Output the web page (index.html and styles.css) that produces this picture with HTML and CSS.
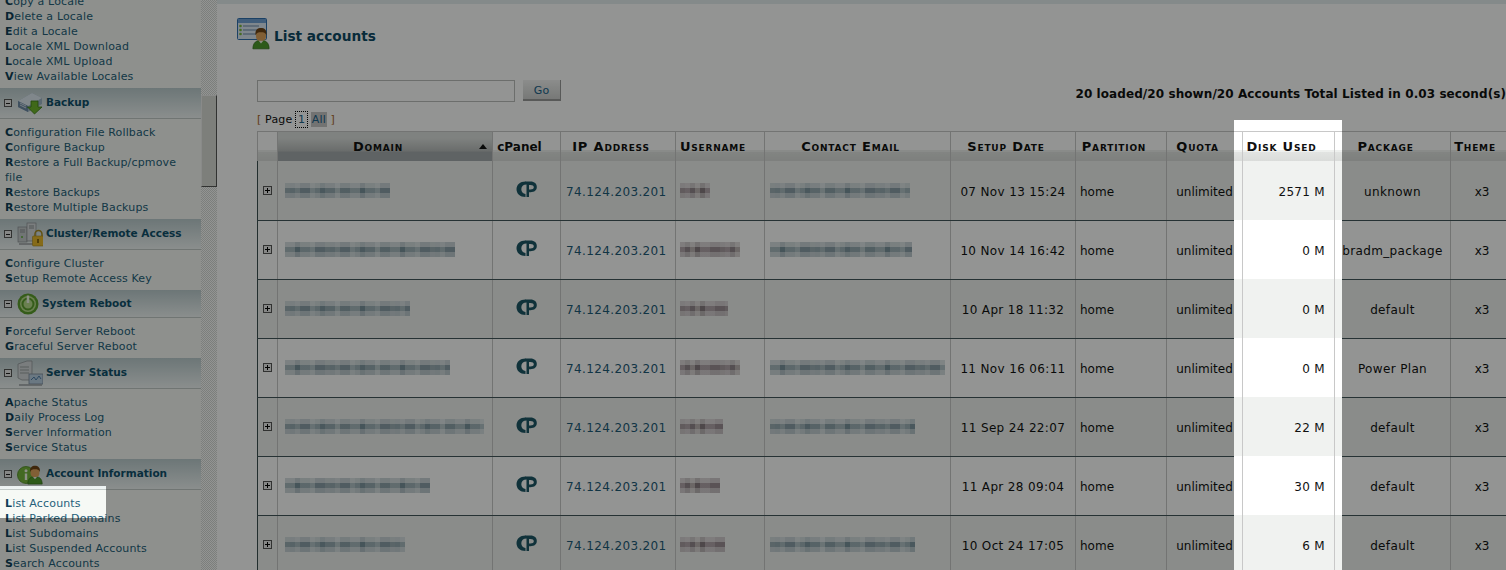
FILE: index.html
```html
<!DOCTYPE html>
<html lang="en">
<head>
    <meta charset="UTF-8">
    <meta name="viewport" content="width=device-width, initial-scale=1.0">
    <title>List accounts</title>
    <link rel="stylesheet" href="styles.css">
</head>
<body>
    <svg class="defs" width="0" height="0">
        <symbol id="user" viewBox="0 0 20 24">
            <path d="M1 24C1 17 5 14.500 10 14.500S19 17 19 24Z" fill="#4f9a2c" stroke="#2f6b18" stroke-width=".8"/>
            <path d="M7 14.500L10 18L13 14.500Z" fill="#f2f2ea"/>
            <rect x="4.500" y="3" width="11" height="12" rx="4.500" fill="#e0a45c"/>
            <path d="M4 9C3 3 6.500 1 10 1S17 3 16 9C15 6 13 5.500 10 5.500S5 6 4 9Z" fill="#6e4316"/>
        </symbol>
        <symbol id="cp" viewBox="0 0 21 16">
            <path d="M9.500 .5C4 .5 .5 3.800 .5 8.300S4 16 9.500 16V13C7 12.600 5.300 10.800 5.300 8.300S7 3.900 9.500 3.500Z" fill="#1c5566"/>
            <path fill-rule="evenodd" d="M9 .5H14.500C18.500 .5 20.800 2.800 20.800 6S18.500 11.200 14.500 11.200H13V16H10.500V3.500H9Z M13 4V8.500H14.500C16.500 8.500 17.800 7.500 17.800 6.200S16.500 4 14.500 4Z" fill="#1c5566"/>
        </symbol>
        <symbol id="plus" viewBox="0 0 9 9">
            <rect x=".5" y=".5" width="8" height="8" fill="#e8e8e8" stroke="#555"/>
            <path d="M2 4.500H7M4.500 2V7" stroke="#000"/>
        </symbol>
    </svg>

    <div class="page">
        <nav class="sidebar">
            <div class="links links-first">
                <a>Copy a Locale</a>
                <a>Delete a Locale</a>
                <a>Edit a Locale</a>
                <a>Locale XML Download</a>
                <a>Locale XML Upload</a>
                <a>View Available Locales</a>
            </div>

            <div class="group">
                <span class="toggle"></span>
                <svg class="group-icon" viewBox="0 0 26 22">
                    <path d="M1 9L15 1L25 6L25 12L11 20L1 15Z" fill="#9fb4c6"/>
                    <path d="M1 9L15 1L25 6L11 14Z" fill="#dfe9f2"/>
                    <path d="M1 9L11 14V20L1 15Z" fill="#6d8aa6"/>
                    <path d="M3 11L9 14M3 13L9 16" stroke="#e8eef4" stroke-width=".8"/>
                    <path d="M14 9H21V15H25L17.500 22L10.500 15H14Z" fill="#6fb52e" stroke="#3b7a16" stroke-width=".8"/>
                </svg>
                <span class="group-name">Backup</span>
            </div>
            <div class="links">
                <a>Configuration File Rollback</a>
                <a>Configure Backup</a>
                <a>Restore a Full Backup/cpmove file</a>
                <a>Restore Backups</a>
                <a>Restore Multiple Backups</a>
            </div>

            <div class="group">
                <span class="toggle"></span>
                <svg class="group-icon" viewBox="0 0 26 26">
                    <rect x="1" y="6" width="9" height="15" fill="#c5c9cc" stroke="#8a8f93" stroke-width=".7"/>
                    <rect x="10" y="2" width="9" height="18" fill="#d6d9dc" stroke="#8a8f93" stroke-width=".7"/>
                    <path d="M3 9H8M3 11H8M12 5H17M12 7H17" stroke="#8a8f93"/>
                    <circle cx="5" cy="16" r="1" fill="#5fae3a"/>
                    <path d="M2 23H16" stroke="#9a9ea2" stroke-width="1.500"/>
                    <path d="M18 15V13A3.500 3.500 0 0 1 25 13V15" fill="none" stroke="#a88a20" stroke-width="1.500"/>
                    <rect x="15.500" y="15" width="11" height="10" rx="1" fill="#e8b82c" stroke="#a88a20" stroke-width=".6"/>
                    <rect x="20" y="18" width="2" height="4" fill="#8a6a10"/>
                </svg>
                <span class="group-name">Cluster/Remote Access</span>
            </div>
            <div class="links">
                <a>Configure Cluster</a>
                <a>Setup Remote Access Key</a>
            </div>

            <div class="group group-short">
                <span class="toggle"></span>
                <svg class="group-icon icon-reboot" viewBox="0 0 22 22">
                    <circle cx="11" cy="11" r="10.500" fill="#5d9e2e"/>
                    <circle cx="11" cy="11" r="8" fill="#b8dc8c"/>
                    <circle cx="11" cy="11" r="5.500" fill="none" stroke="#5d9e2e" stroke-width="2"/>
                    <path d="M11 2.500V10" stroke="#f2f8e8" stroke-width="2.500"/>
                </svg>
                <span class="group-name">System Reboot</span>
            </div>
            <div class="links">
                <a>Forceful Server Reboot</a>
                <a>Graceful Server Reboot</a>
            </div>

            <div class="group">
                <span class="toggle"></span>
                <svg class="group-icon" viewBox="0 0 26 26">
                    <path d="M1 4L10 1H15V20H5L1 18Z" fill="#d4d8da" stroke="#8a8f93" stroke-width=".7"/>
                    <path d="M3 7H12M3 10H12M3 13H12" stroke="#9a9ea2"/>
                    <rect x="12" y="14" width="14" height="10" fill="#b9cee2" stroke="#7b8a9a" stroke-width=".8"/>
                    <path d="M14 20L17 17L19 20L22 16L24 19" fill="none" stroke="#4e7ca8"/>
                    <path d="M2 25H25" stroke="#9a9ea2" stroke-width="1.500"/>
                </svg>
                <span class="group-name">Server Status</span>
            </div>
            <div class="links">
                <a>Apache Status</a>
                <a>Daily Process Log</a>
                <a>Server Information</a>
                <a>Service Status</a>
            </div>

            <div class="group">
                <span class="toggle"></span>
                <svg class="group-icon" viewBox="0 0 26 26">
                    <circle cx="9" cy="14" r="8.500" fill="#74b43c" stroke="#4c8a22" stroke-width=".8"/>
                    <rect x="7.800" y="12.500" width="2.400" height="6.500" fill="#f4f8ea"/>
                    <circle cx="9" cy="9.800" r="1.500" fill="#f4f8ea"/>
                    <use href="#user" x="10" y="1" width="16" height="25"/>
                </svg>
                <span class="group-name">Account Information</span>
            </div>
            <div class="links">
                <a>List Accounts</a>
                <a>List Parked Domains</a>
                <a>List Subdomains</a>
                <a>List Suspended Accounts</a>
                <a>Search Accounts</a>
            </div>
        </nav>

        <div class="scrollbar"><div class="thumb"></div></div>

        <main class="content">
            <div class="topstrip"></div>
            <h1 class="title">
                <svg class="title-icon" viewBox="0 0 33 33">
                    <rect x=".5" y=".5" width="29" height="21" rx="1" fill="#dce8f4" stroke="#2f6fb0"/>
                    <rect x="1" y="1" width="28" height="4" fill="#6fa0d4"/>
                    <path d="M6 8H22M6 12H22M6 16H22" stroke="#6a8aa8"/>
                    <circle cx="3.500" cy="8" r="1.300" fill="#7ab83c"/>
                    <circle cx="3.500" cy="12" r="1.300" fill="#7ab83c"/>
                    <circle cx="3.500" cy="16" r="1.300" fill="#7ab83c"/>
                    <use href="#user" x="15" y="7" width="18" height="26"/>
                </svg>
                <span class="title-text">List accounts</span>
            </h1>

            <div class="searchrow">
                <input class="search" type="text">
                <button class="go" type="button">Go</button>
                <div class="status">20 loaded/20 shown/20 Accounts Total Listed in 0.03 second(s)</div>
            </div>

            <div class="pager"><span class="bracket">[</span> Page <a class="current">1</a> <a class="all">All</a> <span class="bracket">]</span></div>

            <table class="accounts">
                <colgroup>
                    <col class="c-exp"><col class="c-domain"><col class="c-cpanel"><col class="c-ip"><col class="c-user">
                    <col class="c-email"><col class="c-date"><col class="c-part"><col class="c-quota"><col class="c-disk">
                    <col class="c-pack"><col class="c-theme">
                </colgroup>
                <thead>
                    <tr>
                        <th></th>
                        <th class="sorted">Domain<span class="arrow"></span></th>
                        <th class="plain">cPanel</th>
                        <th>IP Address</th>
                        <th>Username</th>
                        <th>Contact Email</th>
                        <th>Setup Date</th>
                        <th>Partition</th>
                        <th>Quota</th>
                        <th>Disk Used</th>
                        <th>Package</th>
                        <th>Theme</th>
                    </tr>
                </thead>
                <tbody>
                    <tr>
                        <td class="exp"><svg class="plus"><use href="#plus"/></svg></td>
                        <td class="domain"><span class="blur" style="width:105px"></span></td>
                        <td class="logo"><svg class="cp"><use href="#cp"/></svg></td>
                        <td class="ip">74.124.203.201</td>
                        <td class="user"><span class="blur blur-user" style="width:30px"></span></td>
                        <td class="email"><span class="blur" style="width:140px"></span></td>
                        <td class="mid wide">07 Nov 13 15:24</td>
                        <td class="part">home</td>
                        <td class="mid">unlimited</td>
                        <td class="disk">2571 M</td>
                        <td class="mid wide">unknown</td>
                        <td class="mid">x3</td>
                    </tr>
                    <tr>
                        <td class="exp"><svg class="plus"><use href="#plus"/></svg></td>
                        <td class="domain"><span class="blur" style="width:170px"></span></td>
                        <td class="logo"><svg class="cp"><use href="#cp"/></svg></td>
                        <td class="ip">74.124.203.201</td>
                        <td class="user"><span class="blur blur-user" style="width:60px"></span></td>
                        <td class="email"><span class="blur" style="width:142px"></span></td>
                        <td class="mid wide">10 Nov 14 16:42</td>
                        <td class="part">home</td>
                        <td class="mid">unlimited</td>
                        <td class="disk">0 M</td>
                        <td class="mid wide">bradm_package</td>
                        <td class="mid">x3</td>
                    </tr>
                    <tr>
                        <td class="exp"><svg class="plus"><use href="#plus"/></svg></td>
                        <td class="domain"><span class="blur" style="width:125px"></span></td>
                        <td class="logo"><svg class="cp"><use href="#cp"/></svg></td>
                        <td class="ip">74.124.203.201</td>
                        <td class="user"><span class="blur blur-user" style="width:48px"></span></td>
                        <td class="email"></td>
                        <td class="mid wide">10 Apr 18 11:32</td>
                        <td class="part">home</td>
                        <td class="mid">unlimited</td>
                        <td class="disk">0 M</td>
                        <td class="mid wide">default</td>
                        <td class="mid">x3</td>
                    </tr>
                    <tr>
                        <td class="exp"><svg class="plus"><use href="#plus"/></svg></td>
                        <td class="domain"><span class="blur" style="width:165px"></span></td>
                        <td class="logo"><svg class="cp"><use href="#cp"/></svg></td>
                        <td class="ip">74.124.203.201</td>
                        <td class="user"><span class="blur blur-user" style="width:60px"></span></td>
                        <td class="email"><span class="blur" style="width:175px"></span></td>
                        <td class="mid wide">11 Nov 16 06:11</td>
                        <td class="part">home</td>
                        <td class="mid">unlimited</td>
                        <td class="disk">0 M</td>
                        <td class="mid wide">Power Plan</td>
                        <td class="mid">x3</td>
                    </tr>
                    <tr>
                        <td class="exp"><svg class="plus"><use href="#plus"/></svg></td>
                        <td class="domain"><span class="blur" style="width:199px"></span></td>
                        <td class="logo"><svg class="cp"><use href="#cp"/></svg></td>
                        <td class="ip">74.124.203.201</td>
                        <td class="user"><span class="blur blur-user" style="width:43px"></span></td>
                        <td class="email"><span class="blur" style="width:145px"></span></td>
                        <td class="mid wide">11 Sep 24 22:07</td>
                        <td class="part">home</td>
                        <td class="mid">unlimited</td>
                        <td class="disk">22 M</td>
                        <td class="mid wide">default</td>
                        <td class="mid">x3</td>
                    </tr>
                    <tr>
                        <td class="exp"><svg class="plus"><use href="#plus"/></svg></td>
                        <td class="domain"><span class="blur" style="width:145px"></span></td>
                        <td class="logo"><svg class="cp"><use href="#cp"/></svg></td>
                        <td class="ip">74.124.203.201</td>
                        <td class="user"><span class="blur blur-user" style="width:40px"></span></td>
                        <td class="email"></td>
                        <td class="mid wide">11 Apr 28 09:04</td>
                        <td class="part">home</td>
                        <td class="mid">unlimited</td>
                        <td class="disk">30 M</td>
                        <td class="mid wide">default</td>
                        <td class="mid">x3</td>
                    </tr>
                    <tr>
                        <td class="exp"><svg class="plus"><use href="#plus"/></svg></td>
                        <td class="domain"><span class="blur" style="width:120px"></span></td>
                        <td class="logo"><svg class="cp"><use href="#cp"/></svg></td>
                        <td class="ip">74.124.203.201</td>
                        <td class="user"><span class="blur blur-user" style="width:45px"></span></td>
                        <td class="email"><span class="blur" style="width:145px"></span></td>
                        <td class="mid wide">10 Oct 24 17:05</td>
                        <td class="part">home</td>
                        <td class="mid">unlimited</td>
                        <td class="disk">6 M</td>
                        <td class="mid wide">default</td>
                        <td class="mid">x3</td>
                    </tr>
                </tbody>
            </table>
        </main>
    </div>

    <!-- dim layer with two spotlight holes, the row rules stop at the holes -->
    <svg class="dim" viewBox="0 0 1506 570">
        <path class="dim-fill" fill-rule="evenodd" d="M0 0H1506V570H0Z M1234 120H1342V570H1234Z M0 486H106V518H0Z"/>
        <path class="dim-rules" d="M257 220.500H1234M1342 220.500H1506M257 279.500H1234M1342 279.500H1506M257 338.500H1234M1342 338.500H1506M257 397.500H1234M1342 397.500H1506M257 456.500H1234M1342 456.500H1506M257 515.500H1234M1342 515.500H1506"/>
    </svg>
</body>
</html>
```

FILE: styles.css
```css
html, body {
    margin: 0;
    height: 570px;
    overflow: hidden;
}
body {
    position: relative;
    background: #fff;
    font-family: "DejaVu Sans", Verdana, sans-serif;
    font-size: 12px;
    color: #111;
}
.defs {
    position: absolute;
}
.page {
    display: flex;
    height: 570px;
}

/* sidebar */
.sidebar {
    width: 201px;
    flex: none;
    background: #f6f9f5;
    font-size: 11px;
    line-height: 15px;
}
.links {
    padding: 6px 18px 4px 5px;
    letter-spacing: .15px;
}
.links-first {
    margin-top: -6px;
    padding-top: 0;
}
.links a {
    display: block;
    color: #255f7a;
}
.links a::first-letter {
    font-weight: bold;
    color: #0f3f58;
}
.group {
    display: flex;
    align-items: center;
    height: 31px;
    box-sizing: border-box;
    padding-left: 4px;
    border-bottom: 1px solid #c2cac8;
    background: linear-gradient(#bccccf, #f0f5f5);
}
.group-short {
    height: 28px;
}
.toggle {
    width: 6px;
    height: 6px;
    flex: none;
    border: 1px solid #555;
    background: linear-gradient(#222, #222) center / 4px 1px no-repeat #e8e8e8;
}
.group-icon {
    width: 26px;
    height: 26px;
    flex: none;
    margin-left: 5px;
}
.icon-reboot {
    width: 22px;
    height: 22px;
}
.group-name {
    margin-left: 3px;
    margin-bottom: 1px;
    font-weight: bold;
    font-size: 10.5px;
    color: #0f4f6b;
}

/* fake scrollbar */
.scrollbar {
    width: 16px;
    flex: none;
    background: repeating-conic-gradient(#d8dad8 0 25%, #fff 0 50%) 0 0 / 2px 2px;
}
.thumb {
    height: 92px;
    margin-top: 95px;
    box-sizing: border-box;
    background: #d9dad6;
    border-top: 1px solid #eee;
    border-left: 1px solid #eee;
    border-right: 1px solid #555;
    border-bottom: 1px solid #555;
}

/* main area */
.content {
    flex: 1;
    min-width: 0;
}
.topstrip {
    height: 4px;
    background: #e6eef0;
}
.title {
    display: flex;
    align-items: center;
    height: 33px;
    margin: 14px 0 0 20px;
    font-size: 13.7px;
    color: #0f4a66;
}
.title-icon {
    width: 33px;
    height: 33px;
    margin-right: 4px;
}
.title-text {
    margin-top: 2px;
}
.searchrow {
    display: flex;
    align-items: flex-start;
    margin: 29px 0 0 40px;
}
.search {
    width: 258px;
    height: 22px;
    box-sizing: border-box;
    margin: 0;
    border: 1px solid #bcbebb;
    background: #fff;
}
.go {
    width: 38px;
    height: 21px;
    margin-left: 8px;
    padding: 2px 0 0;
    border: none;
    border-right: 1px solid #999;
    border-bottom: 2px solid #999;
    background: linear-gradient(#f2f2f2, #cfd0cf);
    font: 11px "DejaVu Sans", Verdana, sans-serif;
    color: #20628a;
}
.status {
    margin: 7px 0 0 auto;
    font-weight: bold;
    letter-spacing: .08px;
    white-space: nowrap;
    color: #111;
}
.pager {
    margin: 9px 0 0 40px;
    height: 20px;
    line-height: 17px;
    font-size: 11px;
    letter-spacing: .15px;
}
.bracket {
    color: #a8662a;
}
.current {
    outline: 1px dotted #000;
    color: #20628a;
    padding: 1px 2px;
}
.all {
    background: #c6c6c6;
    color: #20628a;
    padding: 1px 1px;
}

/* table */
.accounts {
    width: 1256px;
    margin-left: 40px;
    table-layout: fixed;
    border-collapse: separate;
    border-spacing: 0;
}
.c-exp { width: 20px; }
.c-domain { width: 215px; }
.c-cpanel { width: 68px; }
.c-ip { width: 115px; }
.c-user { width: 89px; }
.c-email { width: 186px; }
.c-date { width: 125px; }
.c-part { width: 91px; }
.c-quota { width: 76px; }
.c-disk { width: 92px; }
.c-pack { width: 116px; }
.c-theme { width: 63px; }

th {
    height: 30px;
    padding: 0 14px 0 0;
    box-sizing: border-box;
    border-top: 1px solid #c8c8c8;
    border-left: 1px solid #c8c8c8;
    background: linear-gradient(#fff 0 18px, #eef0ee 18px 20px, #e2e4e2 20px, #dadcda 100%);
    font-size: 13px;
    font-weight: bold;
    font-variant: small-caps;
    letter-spacing: .8px;
    color: #111;
    white-space: nowrap;
}
th.plain {
    font-size: 12px;
    font-variant: normal;
    letter-spacing: 0;
}
th.sorted {
    position: relative;
    background: linear-gradient(#dde0de 0 6px, #b8bbbb 19px, #a6abae 20px, #a6abae 100%);
}
.arrow {
    position: absolute;
    right: 5px;
    top: 12px;
    border: 4px solid transparent;
    border-top: none;
    border-bottom: 5px solid #111;
}
td {
    height: 59px;
    padding: 2px 0 0;
    box-sizing: border-box;
    border-left: 1px solid #c8c8c8;
    font-size: 12px;
    color: #111;
    white-space: nowrap;
}
tbody tr:nth-child(odd) td {
    background: #f0f2f0;
}
tbody tr td:first-child {
    border-left-color: #3b4f51;
}
.exp {
    text-align: center;
}
.plus {
    display: block;
    width: 9px;
    height: 9px;
    margin: -3px 0 0 5px;
}
.domain {
    padding-left: 7px;
}
.logo {
    text-align: center;
}
.cp {
    display: block;
    width: 21px;
    height: 16px;
    margin: -6px auto 0;
}
.ip {
    padding-left: 5px;
    letter-spacing: .37px;
    color: #1f5a78;
}
.user {
    padding-left: 4px;
}
.email {
    padding-left: 5px;
}
.mid {
    text-align: center;
}
.wide {
    letter-spacing: .35px;
}
.part {
    padding-left: 4px;
}
.disk {
    padding-right: 9px;
    letter-spacing: .3px;
    text-align: right;
}

/* pixelated names */
.blur {
    display: block;
    height: 15px;
    margin-top: -2px;
    background-image:
        linear-gradient(rgba(255,255,255,.6) 0 5px, rgba(255,255,255,.12) 5px 10px, rgba(255,255,255,.5) 10px),
        linear-gradient(90deg, #8fa3ab 0 5px, #8a9fa8 5px 10px, #9db0b6 10px 15px, #7b929d 15px 25px, #a9bac0 25px 30px, #93a8b0 30px 35px,
            #6f8995 35px 40px, #8a9fa8 40px 50px, #b0c0c5 50px 55px, #7f96a0 55px 65px, #9db0b6 65px 75px, #68838f 75px 80px,
            #93a8b0 80px 90px, #a9bac0 90px 95px, #7b929d 95px 105px);
    background-size: 100% 100%, 105px 100%;
}
tr:nth-child(even) .blur {
    background-position: 0 0, 40px 0;
}
.blur-user {
    background-image:
        linear-gradient(rgba(255,255,255,.6) 0 5px, rgba(255,255,255,.12) 5px 10px, rgba(255,255,255,.5) 10px),
        linear-gradient(90deg, #9c8f95 0 5px, #a89aa0 5px 10px, #85787e 10px 15px, #b3a8a8 15px 20px, #77696f 20px 25px, #a89aa0 25px 35px, #8f8088 35px 45px);
    background-size: 100% 100%, 45px 100%;
}

/* dim layer */
.dim {
    position: absolute;
    top: 0;
    left: 0;
    width: 1506px;
    height: 570px;
}
.dim-fill {
    fill: rgba(0, 3, 0, .425);
}
.dim-rules {
    fill: none;
    stroke: #263234;
    stroke-width: 1;
}
```
